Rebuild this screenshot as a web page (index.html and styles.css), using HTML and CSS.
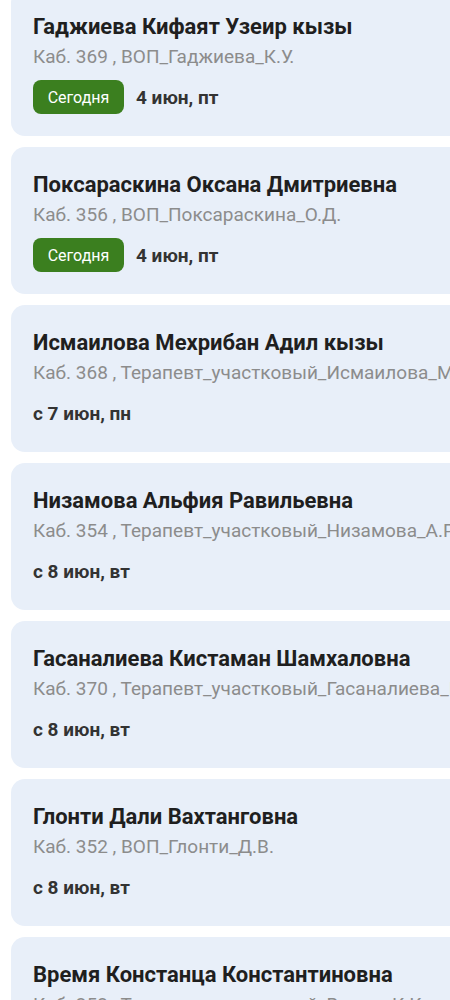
FILE: index.html
```html
<!DOCTYPE html>
<html lang="ru">
<head>
<meta charset="utf-8">
<link rel="stylesheet" href="styles.css">
</head>
<body>
<div class="list">
  <div class="card">
    <div class="name">Гаджиева Кифаят Узеир кызы</div>
    <div class="sub">Каб. 369 , ВОП_Гаджиева_К.У.</div>
    <div class="row"><span class="badge">Сегодня</span><span class="date">4 июн, пт</span></div>
  </div>
  <div class="card">
    <div class="name">Поксараскина Оксана Дмитриевна</div>
    <div class="sub">Каб. 356 , ВОП_Поксараскина_О.Д.</div>
    <div class="row"><span class="badge">Сегодня</span><span class="date">4 июн, пт</span></div>
  </div>
  <div class="card">
    <div class="name">Исмаилова Мехрибан Адил кызы</div>
    <div class="sub">Каб. 368 , Терапевт_участковый_Исмаилова_М.А.</div>
    <div class="row"><span class="date">с 7 июн, пн</span></div>
  </div>
  <div class="card">
    <div class="name">Низамова Альфия Равильевна</div>
    <div class="sub">Каб. 354 , Терапевт_участковый_Низамова_А.Р.</div>
    <div class="row"><span class="date">с 8 июн, вт</span></div>
  </div>
  <div class="card">
    <div class="name">Гасаналиева Кистаман Шамхаловна</div>
    <div class="sub">Каб. 370 , Терапевт_участковый_Гасаналиева_К.Ш.</div>
    <div class="row"><span class="date">с 8 июн, вт</span></div>
  </div>
  <div class="card">
    <div class="name">Глонти Дали Вахтанговна</div>
    <div class="sub">Каб. 352 , ВОП_Глонти_Д.В.</div>
    <div class="row"><span class="date">с 8 июн, вт</span></div>
  </div>
  <div class="card">
    <div class="name">Время Констанца Константиновна</div>
    <div class="sub">Каб. 353 , Терапевт_участковый_Время_К.К.</div>
    <div class="row"><span class="date">с 8 июн, вт</span></div>
  </div>
</div>
</body>
</html>
```
FILE: styles.css
```css
html, body {
  margin: 0;
  padding: 0;
  background: #ffffff;
  overflow: hidden;
}
body {
  font-family: Roboto, "Liberation Sans", sans-serif;
  width: 450px;
  height: 1000px;
}
.list {
  display: flex;
  flex-direction: column;
  gap: 11px;
  margin-top: -11px;
  padding-left: 11px;
}
.card {
  width: 470px;
  box-sizing: border-box;
  height: 147px;
  background: #e8eff9;
  border-radius: 14px;
  padding: 24px 0 0 22px;
  white-space: nowrap;
  overflow: hidden;
}
.name {
  font-size: 22px;
  font-weight: 700;
  line-height: 28px;
  color: #1f1f1f;
}
.sub {
  margin-top: 4px;
  font-size: 19px;
  line-height: 24px;
  color: #8c8c8c;
}
.row {
  margin-top: 11px;
  height: 34px;
  display: flex;
  align-items: center;
  gap: 12px;
}
.badge {
  display: inline-flex;
  align-items: center;
  justify-content: center;
  width: 91px;
  height: 34px;
  border-radius: 8px;
  background: #3b7f1f;
  color: #ffffff;
  font-size: 16px;
}
.date {
  font-size: 19px;
  font-weight: 700;
  color: #333333;
}
```
